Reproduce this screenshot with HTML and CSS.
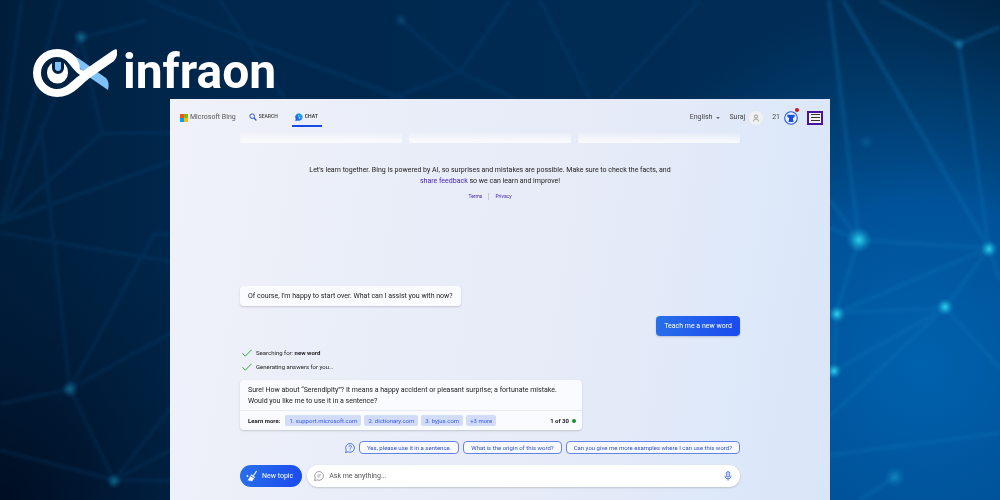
FILE: index.html
```
<!DOCTYPE html>
<html lang="en">
<head>
<meta charset="utf-8">
<title>Infraon – Bing Chat</title>
<link rel="stylesheet" href="styles.css">
</head>
<body>
<svg class="network" viewBox="0 0 1000 500" preserveAspectRatio="xMidYMid slice" aria-hidden="true">
  <defs>
    <linearGradient id="base" x1="0" y1="0" x2="1" y2="0">
      <stop offset="0" stop-color="#001e3c"/><stop offset=".17" stop-color="#00264b"/><stop offset=".5" stop-color="#002a52"/><stop offset=".83" stop-color="#002d56"/><stop offset="1" stop-color="#002443"/>
    </linearGradient>
    <radialGradient id="bright" gradientUnits="userSpaceOnUse" cx="925" cy="365" r="370">
      <stop offset="0" stop-color="#0061ad"/><stop offset=".45" stop-color="#005298"/><stop offset=".75" stop-color="#004176" stop-opacity=".7"/><stop offset="1" stop-color="#003a6c" stop-opacity="0"/>
    </radialGradient>
    <radialGradient id="dark" gradientUnits="userSpaceOnUse" cx="0" cy="500" r="290">
      <stop offset="0" stop-color="#000d22"/><stop offset="1" stop-color="#001c38" stop-opacity="0"/>
    </radialGradient>
    <radialGradient id="node"><stop offset="0" stop-color="#2fd0ee"/><stop offset=".35" stop-color="#1db0d8" stop-opacity=".8"/><stop offset="1" stop-color="#0a80c0" stop-opacity="0"/></radialGradient>
    <filter id="soft"><feGaussianBlur stdDeviation="1.5"/></filter>
  </defs>
  <rect width="1000" height="500" fill="url(#base)"/>
  <rect width="1000" height="500" fill="url(#bright)"/>
  <rect width="1000" height="500" fill="url(#dark)"/>
  <g fill="none" stroke="#0b5b96" stroke-width="4" opacity=".15" filter="url(#soft)">
    <path d="M22 0 0 160M60 0l-60 222M81 38 2 223 102 133 81 38 147 20M102 133h75M0 223l180-65M0 233l180 30M41 125 70 389 154 234M70 389l110-61M70 389 0 404M70 389l44 91 66-83M114 480l66-35M114 480l66 1M114 480 0 450M154 234h26M147 0l100 40 160 60M220 0l65 99M400 20l60 52 50-72M460 72l-70 27M460 72l55 27M540 0l50 99M700 0l-90 99"/>
  </g>
  <g fill="none" stroke="#0a76b6" stroke-width="5" opacity=".25" filter="url(#soft)">
    <path d="M829 0l30 240M843 0l146 248L959 44 880 0M959 44l41-17M859 240l130 8M859 240l-29-40M859 240l-29-12M859 240l-23 73M989 248l-152 65 108-5 44-60 11 32M837 313l-3 58 111-63 55 60M945 308 830 416M830 455l170-22M895 477l-35 23"/>
  </g>
  <g fill="url(#node)">
    <circle cx="859" cy="240" r="13"/><circle cx="989" cy="249" r="9"/><circle cx="837" cy="314" r="9"/><circle cx="945" cy="307" r="9"/><circle cx="834" cy="371" r="8"/>
    <g opacity=".35"><circle cx="959" cy="44" r="7"/><circle cx="895" cy="477" r="11"/><circle cx="81" cy="37" r="8"/><circle cx="70" cy="389" r="9"/><circle cx="114" cy="481" r="8"/></g>
    <g opacity=".15"><circle cx="866" cy="142" r="8"/><circle cx="401" cy="20" r="7"/></g>
  </g>
</svg>

<div class="page">
  <div class="brand">
    <svg class="brand-mark" viewBox="0 0 84 48" aria-hidden="true">
      <path fill="#7fc1fb" d="M41 7C47 10 54 15 60 20L73 29Q77 33 75 41L56 28Q48 22 42 12Z"/>
      <path fill="#fff" fill-rule="evenodd" d="M24 0C33 0 40 4 44 10Q47 15 47 20L50 22L79 2Q83-1 84 1Q85 8 81 12L58 28C47 36 40 48 24 48A24 24 0 0 1 24 0ZM24 8A16 16 0 0 0 24 40C33 40 37 33 47 26C38 20 35 8 24 8Z"/>
      <path fill="#fff" d="M19 14v5a6 6 0 0 0 12 0v-5Q35 18 35 24A10.500 10.500 0 0 1 14 24Q14 18 19 14Z"/>
      <path fill="#7fc1fb" d="M22 13h6v6a3 3 0 0 1-6 0Z"/>
    </svg>
    <span class="brand-name">infraon</span>
  </div>

  <main class="window">
    <header class="topbar">
      <a class="bing" href="#"><svg class="ms" viewBox="0 0 8 8" aria-hidden="true"><path fill="#f25022" d="M0 0h4v4H0z"/><path fill="#7fba00" d="M4 0h4v4H4z"/><path fill="#00a4ef" d="M0 4h4v4H0z"/><path fill="#ffb900" d="M4 4h4v4H4z"/></svg>Microsoft Bing</a>
      <nav class="tabs">
        <a class="tab" href="#"><svg class="icon8" viewBox="0 0 8 8" aria-hidden="true"><circle cx="3.200" cy="3.200" r="2.300" fill="none" stroke="#2a55dd"/><path stroke="#2a55dd" stroke-width="1.200" d="m5 5 2.400 2.500"/></svg>SEARCH</a>
        <a class="tab active" href="#"><svg class="icon8" viewBox="0 0 8 8" aria-hidden="true"><defs><linearGradient id="chat" x1="1" y1="0" x2="0" y2="1"><stop offset="0" stop-color="#25bdf0"/><stop offset="1" stop-color="#1747dd"/></linearGradient></defs><path fill="url(#chat)" d="M4 .2A3.800 3.800 0 1 1 2.400 7.500L.3 8l.4-2.200A3.800 3.800 0 0 1 4 .2Z"/><path fill="#a9e6ff" d="m3.300 2 .8.300v1.500l1.600.7-1.500 1.300-1-.4.800-.5z"/></svg>CHAT</a>
      </nav>
      <div class="account">
        <button class="plain lang">English <span class="caret"></span></button>
        <button class="plain user">Suraj <span class="avatar"><svg viewBox="0 0 8 8" aria-hidden="true"><g fill="none" stroke="#777" stroke-width=".7"><circle cx="4" cy="2.500" r="1.600"/><path d="M1.600 7.500V6.800Q1.700 4.900 4 4.900T6.400 6.800v.7"/></g></svg></span></button>
        <button class="plain points">21 <span class="medal"><svg viewBox="0 0 14 14" aria-hidden="true"><circle cx="7" cy="7" r="6.300" fill="#edf4ff" stroke="#2355e6" stroke-width="1.100"/><path fill="#174de0" d="M3.300 3.700h7.400v1.800q-.4 1.300-1.700 1.300V9.600h.5v1.300h-5V9.600H5V6.800q-1.300 0-1.700-1.300Z"/></svg><i class="alert"></i></span></button>
        <button class="menu" aria-label="Menu"><span></span><span></span><span></span></button>
      </div>
    </header>

    <div class="column">
      <div class="cards"><div class="card"></div><div class="card"></div><div class="card"></div></div>
      <p class="notice">Let's learn together. Bing is powered by AI, so surprises and mistakes are possible. Make sure to check the facts, and <a href="#">share feedback</a> so we can learn and improve!</p>
      <div class="legal"><a href="#">Terms</a><a href="#">Privacy</a></div>

      <section class="thread">
        <div class="bubble">Of course, I'm happy to start over. What can I assist you with now?</div>
        <div class="bubble mine">Teach me a new word</div>
        <ul class="steps">
          <li><svg viewBox="0 0 10 8" aria-hidden="true"><path d="m.5 4.200 2.800 3L9.500.8"/></svg><span>Searching for: <b>new word</b></span></li>
          <li><svg viewBox="0 0 10 8" aria-hidden="true"><path d="m.5 4.200 2.800 3L9.500.8"/></svg><span>Generating answers for you…</span></li>
        </ul>
        <article class="answer">
          <p>Sure! How about “Serendipity”? It means a happy accident or pleasant surprise; a fortunate mistake. Would you like me to use it in a sentence?</p>
          <footer><b class="more">Learn more:</b><a href="#">1. support.microsoft.com</a><a href="#">2. dictionary.com</a><a href="#">3. byjus.com</a><a href="#">+3 more</a><b class="count">1 of 30</b><i class="dot"></i></footer>
        </article>
      </section>

      <div class="suggestions">
        <svg class="icon10" viewBox="0 0 10 10" aria-hidden="true"><g fill="none" stroke="#2f58da" stroke-width=".8"><path d="M5.200.5A4.400 4.400 0 1 1 3.200 8.900L.6 9.500 1.200 7A4.400 4.400 0 0 1 5.200.5Z"/><path d="M3.900 3.700Q4 2.600 5.200 2.600T6.500 3.700Q6.500 4.300 5.800 4.700T5.200 5.700M5.200 6.500v.8"/></g></svg>
        <button>Yes, please use it in a sentence.</button><button>What is the origin of this word?</button><button>Can you give me more examples where I can use this word?</button>
      </div>

      <form class="composer">
        <button type="button" class="topic"><svg class="icon12" viewBox="0 0 12 12" aria-hidden="true"><path fill="none" stroke="#fff" stroke-width="1.100" d="M10.600 1 7.300 5.700"/><path fill="#fff" d="m5 4.200 4.200 2.900L8.600 8 4.400 5.200ZM4 5.900l4 2.700Q7.300 11 4.600 11.600L5 10.400l-2 .8.500-1-2.200.2Q3.700 8.600 4 5.900ZM1.300 4.600l.5 1 1 .4-1 .4-.5 1-.4-1-.9-.4.900-.4Z"/></svg>New topic</button>
        <div class="field">
          <svg class="icon10" viewBox="0 0 10 10" aria-hidden="true"><g fill="none" stroke="#777" stroke-width=".7"><path d="M5.200.5A4.400 4.400 0 1 1 3.200 8.900L.6 9.500 1.200 7A4.400 4.400 0 0 1 5.200.5Z"/><path d="M3.400 4h3.500M3.400 5.800h2.200"/></g></svg>
          <input type="text" placeholder="Ask me anything..." aria-label="Ask me anything">
          <button type="button" class="plain" aria-label="Use microphone"><svg class="icon10" viewBox="0 0 10 10" aria-hidden="true"><rect x="3.400" y=".6" width="3.200" height="5.600" rx="1.600" fill="#c9d7ff" stroke="#3a66e8" stroke-width=".8"/><path fill="none" stroke="#3a66e8" stroke-width=".8" d="M1.900 4.700a3.100 3.100 0 0 0 6.200 0M5 7.900v1.800"/></svg></button>
        </div>
      </form>
    </div>
  </main>
</div>
</body>
</html>
```
FILE: styles.css
```
* { box-sizing: border-box; }
body { margin: 0; background: #00264b; font-family: Roboto, "Liberation Sans", sans-serif; font-size: 7px; line-height: 11px; color: #222; }
a { color: #4526b0; text-decoration: none; }
button { font: inherit; cursor: pointer; }
svg { display: block; flex: none; }
p, ul { margin: 0; padding: 0; }
.network { position: fixed; inset: 0; z-index: -1; width: 100%; height: 100%; }
.page { display: flex; flex-direction: column; min-height: 100vh; padding-top: 49px; }
.brand { display: flex; align-items: flex-start; gap: 6px; height: 50px; padding-left: 33px; }
.brand-mark { width: 84px; height: 48px; }
.brand-name { color: #fff; font-size: 48px; font-weight: 700; line-height: 46px; }
.window { flex: 1; width: 66%; margin: 0 auto; background: linear-gradient(100deg, #f0f2f8 0%, #eaeef9 30%, #e7ebf8 60%, #dce8f9 88%, #dae5f7 100%); }
.topbar { display: flex; align-items: center; height: 34px; padding: 3px 7px 0 10px; }
.bing { display: flex; align-items: center; gap: 2px; color: #555; }
.ms { width: 8px; height: 8px; }
.tabs { display: flex; gap: 12px; margin-left: 11px; font-size: 5px; font-weight: 500; }
.tab { display: flex; align-items: center; gap: 2px; height: 18px; padding: 0 2px; color: #444; border-bottom: 2px solid transparent; }
.tab.active { color: #222; padding: 0 4px 0 3px; border-color: #174ae4; }
.icon8 { width: 8px; height: 8px; }
.icon10 { width: 10px; height: 10px; }
.icon12 { width: 12px; height: 12px; }
.account { display: flex; align-items: center; gap: 9px; margin-left: auto; }
.plain { display: flex; align-items: center; gap: 4px; padding: 0; border: 0; background: none; color: #444; }
.caret { border: 2px solid transparent; border-top-color: #666; border-bottom: 0; }
.avatar { display: grid; place-items: center; width: 14px; height: 14px; border-radius: 50%; background: #f1f1f1; }
.avatar svg { width: 8px; height: 8px; }
.medal { position: relative; width: 14px; height: 14px; }
.alert { position: absolute; top: -3px; right: -1px; width: 4px; height: 4px; border-radius: 50%; background: #d1101c; }
.menu { display: flex; flex-direction: column; align-items: center; justify-content: center; gap: 2px; width: 16px; height: 14px; padding: 0; border: 2px solid #4a159e; background: #f3f2fb; }
.menu span { width: 9px; height: 1px; background: #333; }
.column { padding: 0 90px 13px 70px; }
.cards { display: grid; grid-template-columns: repeat(3, 1fr); gap: 7px; }
.card { height: 10px; border-radius: 0 0 2px 2px; background: linear-gradient(#ffffff20, #ffffffd0); }
.notice { max-width: 380px; margin: 22px auto 0; text-align: center; }
.legal { display: flex; justify-content: center; margin-top: 6px; font-size: 5px; line-height: 7px; }
.legal a { padding: 0 6px; }
.legal a + a { border-left: 1px solid #c4c7d4; }
.thread { display: flex; flex-direction: column; align-items: flex-start; margin-top: 86px; }
.bubble { padding: 5px 8px 4px; border-radius: 4px; background: #fafbff; box-shadow: 0 1px 2px #0000002b; }
.mine { align-self: flex-end; margin-top: 10px; background: linear-gradient(105deg, #2870ea, #1b4aef); color: #fff; }
.steps { display: grid; gap: 3px; margin: 11px 0 8px 2px; list-style: none; font-size: 6px; }
.steps li { display: flex; align-items: center; gap: 4px; }
.steps svg { width: 10px; height: 8px; fill: none; stroke: #38a838; }
.answer { max-width: 342px; border-radius: 4px; background: #fafbff; box-shadow: 0 1px 2px #0000002b; }
.answer p { padding: 5px 18px 3px 8px; }
.answer footer { display: flex; align-items: center; gap: 3px; padding: 4px 6px 4px 8px; border-top: 1px solid #e8eaf0; font-size: 6px; color: #222; }
.answer footer a { padding: 0 4px; border-radius: 2px; background: #d1dbfa; color: #3b5be0; }
.more { margin-right: 2px; }
.count { margin-left: auto; }
.dot { width: 4px; height: 4px; border-radius: 50%; background: #1f8a3b; }
.suggestions { display: flex; align-items: center; justify-content: flex-end; gap: 4px; margin-top: 11px; font-size: 6px; }
.suggestions button { height: 13px; padding: 0 7px; border: 1px solid #6484e6; border-radius: 4px; background: #f9faff; color: #2f53d4; white-space: nowrap; line-height: 10px; }
.composer { display: flex; gap: 5px; margin: 11px 0 0; }
.topic { display: flex; align-items: center; gap: 4px; height: 22px; padding: 0 9px 0 6px; border: 0; border-radius: 11px; background: linear-gradient(105deg, #2870ea, #1b4aef); color: #fff; }
.field { flex: 1; display: flex; align-items: center; gap: 5px; height: 22px; padding: 0 7px; border-radius: 11px; background: #fff; box-shadow: 0 1px 2px #0000002b; }
.field input { flex: 1; min-width: 0; padding: 0; border: 0; outline: 0; background: none; font: inherit; color: #333; }
.field input::placeholder { color: #555; }
```
